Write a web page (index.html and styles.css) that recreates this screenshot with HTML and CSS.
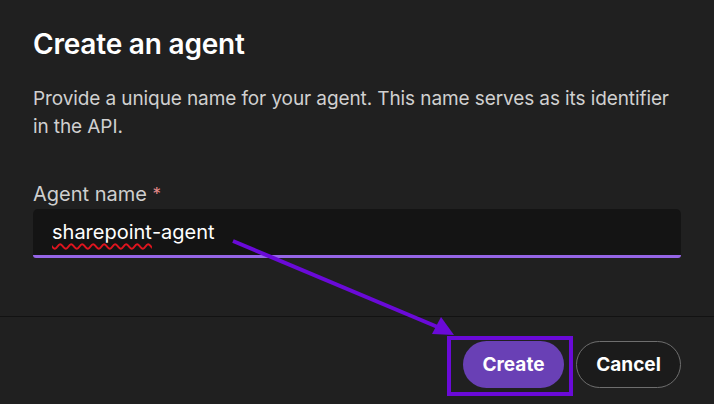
FILE: index.html
```html
<!DOCTYPE html>
<html lang="en">
<head>
<meta charset="utf-8">
<title>Create an agent</title>
<link rel="stylesheet" href="styles.css">
</head>
<body>
<div class="dialog">
  <div class="body">
    <h1 class="title">Create an agent</h1>
    <p class="desc">Provide a unique name for your agent. This name serves as its identifier in the API.</p>
    <div class="field">
      <label class="label">Agent name <span class="req">*</span></label>
      <div class="input"><span class="misspelled">sharepoint</span>-agent</div>
    </div>
  </div>
  <div class="footer">
    <button class="btn primary">Create</button>
    <button class="btn secondary">Cancel</button>
  </div>
</div>
<svg class="annot" width="714" height="404" viewBox="0 0 714 404">
  <line x1="233" y1="241" x2="440" y2="328" stroke="#6a0ad8" stroke-width="4"/>
  <polygon points="432,334 441,317 454,335" fill="#6a0ad8"/>
  <rect x="449" y="338" width="122" height="56" fill="none" stroke="#6a0ad8" stroke-width="4"/>
</svg>
</body>
</html>
```
FILE: styles.css
```css
html, body {
  margin: 0;
  padding: 0;
  background: #202020;
}
body {
  width: 714px;
  height: 404px;
  overflow: hidden;
  position: relative;
  font-family: "Inter", "Noto Sans", sans-serif;
  color: #ffffff;
}
.dialog {
  display: flex;
  flex-direction: column;
  height: 404px;
}
.body {
  padding: 26px 33px 0 33px;
  display: flex;
  flex-direction: column;
}
.title {
  margin: 0;
  font-size: 28px;
  line-height: 36px;
  font-weight: 600;
  letter-spacing: -0.2px;
  color: #ffffff;
}
.desc {
  margin: 23px 0 0 0;
  font-size: 19px;
  line-height: 28px;
  letter-spacing: -0.1px;
  color: #d0d0d0;
}
.field {
  margin-top: 41px;
  display: flex;
  flex-direction: column;
  gap: 3px;
}
.label {
  font-size: 20px;
  line-height: 24px;
  color: #cfcfcf;
}
.req {
  color: #e58a8a;
  font-size: 17px;
  vertical-align: top;
}
.input {
  height: 46px;
  background: #141414;
  border-radius: 5px 5px 3px 3px;
  border-bottom: 3px solid #9565e6;
  display: flex;
  align-items: center;
  padding-left: 19px;
  font-size: 20px;
  line-height: 24px;
  color: #ffffff;
}
.misspelled {
  text-decoration: underline wavy #e0141e;
  text-decoration-thickness: 1.5px;
  text-underline-offset: 4px;
}
.footer {
  margin-top: 58px;
  border-top: 1px solid #121212;
  padding: 24px 33px 0 0;
  display: flex;
  justify-content: flex-end;
  gap: 12px;
}
.btn {
  height: 47px;
  border-radius: 24px;
  font-family: "Inter", "Noto Sans", sans-serif;
  font-size: 19px;
  font-weight: 700;
  color: #ffffff;
  padding: 0;
  cursor: pointer;
}
.primary {
  width: 101px;
  background: #6940b5;
  border: none;
}
.secondary {
  width: 105px;
  background: #1b1b1b;
  border: 1px solid #6e6e6e;
}
.annot {
  position: absolute;
  left: 0;
  top: 0;
  pointer-events: none;
}
```
